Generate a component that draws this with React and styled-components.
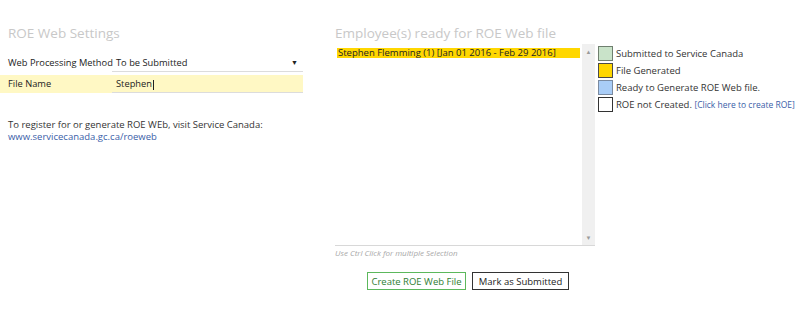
import React from "react";
import styled, { createGlobalStyle } from "styled-components";

const Global = createGlobalStyle`
  html, body { margin: 0; padding: 0; background: #fff; }
  body { font-family: "Open Sans", "Noto Sans", sans-serif; color: #222; }
`;

const Page = styled.div`
  display: flex;
  width: 800px;
  height: 318px;
  padding-top: 24px;
  box-sizing: border-box;
`;

const LeftPanel = styled.div`
  width: 303px;
  display: flex;
  flex-direction: column;
`;

const Title = styled.h2`
  margin: 0;
  font-weight: 400;
  font-size: 13.5px;
  line-height: 18px;
  color: #c8c8c8;
  padding-left: ${p => p.$pad || 0}px;
`;

const Form = styled.div`
  margin-top: 12px;
  display: flex;
  flex-direction: column;
  gap: 3px;
`;

const Row = styled.div`
  display: grid;
  grid-template-columns: 104px 1fr;
  align-items: end;
  height: 18px;
  padding-left: 8px;
  background: ${p => (p.$active ? "#fff8c4" : "transparent")};
`;

const Label = styled.span`
  font-size: 9.3px;
  line-height: 13px;
  padding-bottom: 3px;
  white-space: nowrap;
  color: #222;
`;

const Field = styled.div`
  display: flex;
  align-items: flex-end;
  justify-content: space-between;
  height: 17px;
  box-sizing: content-box;
  border-bottom: 1px solid #dcdcdc;
  padding: 0 5px 0 4px;
  font-size: 9.3px;
  line-height: 13px;
  color: #222;
  & > span { padding-bottom: 2px; }
`;

const Caret = styled.span`
  width: 1px;
  height: 10px;
  background: #222;
  display: inline-block;
  vertical-align: middle;
  margin-left: 1px;
`;

const Arrow = styled.span`
  font-size: 7px;
  color: #222;
`;

const Note = styled.div`
  margin-top: 26px;
  padding-left: 8px;
  font-size: 9.5px;
  line-height: 12px;
  color: #333;
`;

const Link = styled.a`
  color: #3a5ea8;
  text-decoration: none;
  font-size: ${p => p.$size || 9.5}px;
`;

const RightPanel = styled.div`
  margin-left: 32px;
  display: flex;
  flex-direction: column;
`;

const ListArea = styled.div`
  display: flex;
  margin-top: 2px;
  gap: 3px;
`;

const ListColumn = styled.div`
  display: flex;
  flex-direction: column;
  width: 260px;
`;

const ListBox = styled.div`
  display: flex;
  height: 201px;
  border-bottom: 1px solid #d8d8d8;
`;

const Items = styled.div`
  flex: 1;
  padding: 4px 2px;
`;

const Item = styled.div`
  background: #ffd700;
  font-size: 9.5px;
  line-height: 10px;
  height: 10px;
  padding-left: 1px;
  color: #222;
`;

const Scroll = styled.div`
  width: 13px;
  background: #f0f0f0;
  display: flex;
  flex-direction: column;
  justify-content: space-between;
  align-items: center;
  padding: 4px 0 3px;
  font-size: 6px;
  color: #9a9a9a;
`;

const Hint = styled.div`
  font-size: 8px;
  font-style: italic;
  color: #a8a8a8;
  margin-top: 1px;
`;

const Buttons = styled.div`
  display: flex;
  gap: 6px;
  margin-top: 14px;
  padding-left: 32px;
`;

const Button = styled.button`
  height: 18px;
  box-sizing: border-box;
  background: #fff;
  border: 1px solid ${p => (p.$primary ? "#5cb85c" : "#333")};
  color: ${p => (p.$primary ? "#2e7d32" : "#222")};
  font-family: inherit;
  font-size: 9.5px;
  width: ${p => p.$w}px;
  padding: 0;
  cursor: pointer;
`;

const Legend = styled.div`
  display: flex;
  flex-direction: column;
  gap: 2px;
  padding-top: 2px;
`;

const LegendRow = styled.div`
  display: flex;
  align-items: center;
  gap: 3px;
  font-size: 9.5px;
  color: #333;
`;

const Swatch = styled.span`
  width: 15px;
  height: 15px;
  box-sizing: border-box;
  border: 1px solid ${p => p.$border};
  background: ${p => p.$color};
  flex: none;
`;

const legend = [
  { color: "#c9e3c9", border: "#6f7f6f", text: "Submitted to Service Canada" },
  { color: "#ffd700", border: "#4a4a4a", text: "File Generated" },
  { color: "#a9cdf7", border: "#7a8aa0", text: "Ready to Generate ROE Web file." },
  { color: "#ffffff", border: "#333", text: "ROE not Created.", link: "[Click here to create ROE]" },
];

export default function App() {
  return (
    <>
      <Global />
      <Page>
        <LeftPanel>
          <Title $pad={8}>ROE Web Settings</Title>
          <Form>
            <Row>
              <Label>Web Processing Method</Label>
              <Field>
                <span>To be Submitted</span>
                <Arrow>▼</Arrow>
              </Field>
            </Row>
            <Row $active>
              <Label>File Name</Label>
              <Field>
                <span>Stephen<Caret /></span>
              </Field>
            </Row>
          </Form>
          <Note>
            To register for or generate ROE WEb, visit Service Canada:
            <br />
            <Link href="#">www.servicecanada.gc.ca/roeweb</Link>
          </Note>
        </LeftPanel>
        <RightPanel>
          <Title>Employee(s) ready for ROE Web file</Title>
          <ListArea>
            <ListColumn>
              <ListBox>
                <Items>
                  <Item>Stephen Flemming (1) [Jan 01 2016 - Feb 29 2016]</Item>
                </Items>
                <Scroll>
                  <span>▲</span>
                  <span>▼</span>
                </Scroll>
              </ListBox>
              <Hint>Use Ctrl Click for multiple Selection</Hint>
              <Buttons>
                <Button $primary $w={99}>Create ROE Web File</Button>
                <Button $w={97}>Mark as Submitted</Button>
              </Buttons>
            </ListColumn>
            <Legend>
              {legend.map(l => (
                <LegendRow key={l.text}>
                  <Swatch $color={l.color} $border={l.border} />
                  <span>
                    {l.text}
                    {l.link && <> <Link href="#" $size={8.5}>{l.link}</Link></>}
                  </span>
                </LegendRow>
              ))}
            </Legend>
          </ListArea>
        </RightPanel>
      </Page>
    </>
  );
}
